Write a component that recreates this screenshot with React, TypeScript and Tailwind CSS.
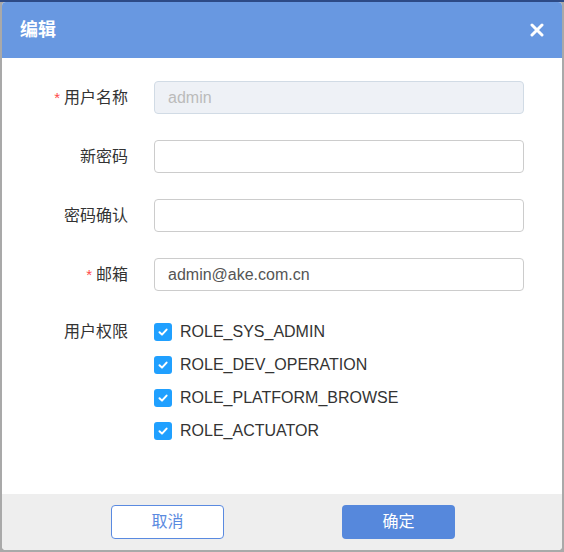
import React from "react";

const font = { fontFamily: '"Liberation Sans", "Noto Sans CJK SC", sans-serif' };

const roles = ["ROLE_SYS_ADMIN", "ROLE_DEV_OPERATION", "ROLE_PLATFORM_BROWSE", "ROLE_ACTUATOR"];

function Field({ label, required, children }: { label: string; required?: boolean; children: React.ReactNode }) {
  return (
    <div className="flex items-center h-[33px]">
      <div className="w-[126px] shrink-0 text-right text-[16px] text-[#333]">
        {required && <span className="text-[#ff4949] mr-[4px] text-[15px]">*</span>}
        {label}
      </div>
      <div className="ml-[26px] w-[370px]">{children}</div>
    </div>
  );
}

function Check({ label }: { label: string }) {
  return (
    <label className="flex items-center h-[33px]">
      <span className="flex h-[18px] w-[18px] items-center justify-center rounded-[3px] bg-[#20a0ff]">
        <svg viewBox="0 0 12 12" className="h-[12px] w-[12px]" fill="none" stroke="#fff" strokeWidth="2" strokeLinecap="round" strokeLinejoin="round">
          <path d="M2.5 6.2 5 8.6 9.6 3.6" />
        </svg>
      </span>
      <span className="ml-[8px] text-[16px] text-[#333]">{label}</span>
    </label>
  );
}

export default function App() {
  return (
    <div className="h-[552px] w-[564px] bg-[#a9a9a9] border-t-2 border-[#2d4a86] pl-[2px] overflow-hidden" style={font}>
      <div className="h-[548px] w-[560px] rounded-[4px] bg-white overflow-hidden flex flex-col">
        <div className="flex h-[56px] items-center justify-between bg-[#6898e1] px-[18px] shrink-0">
          <span className="text-[18px] font-bold text-white">编辑</span>
          <svg viewBox="0 0 14 14" className="h-[14px] w-[14px]" stroke="#fff" strokeWidth="3" strokeLinecap="round">
            <path d="M2 2 12 12M12 2 2 12" />
          </svg>
        </div>
        <div className="flex-1 pt-[23px]">
          <div className="flex flex-col gap-[26px]">
            <Field label="用户名称" required>
              <div className="flex h-[33px] items-center rounded-[4px] border border-[#d1dbe5] bg-[#eef1f6] px-[13px] text-[16px] text-[#bbbbbb]">admin</div>
            </Field>
            <Field label="新密码">
              <div className="h-[33px] rounded-[4px] border border-[#cccccc] bg-white" />
            </Field>
            <Field label="密码确认">
              <div className="h-[33px] rounded-[4px] border border-[#cccccc] bg-white" />
            </Field>
            <Field label="邮箱" required>
              <div className="flex h-[33px] items-center rounded-[4px] border border-[#cccccc] bg-white px-[13px] text-[16px] text-[#555]">admin@ake.com.cn</div>
            </Field>
          </div>
          <div className="mt-[24px] flex">
            <div className="w-[126px] shrink-0 text-right text-[16px] text-[#333] h-[33px] leading-[33px]">用户权限</div>
            <div className="ml-[26px] flex flex-col">
              {roles.map((r) => (
                <Check key={r} label={r} />
              ))}
            </div>
          </div>
        </div>
        <div className="flex h-[56px] shrink-0 items-center bg-[#eeeeee] pl-[109px]">
          <button className="h-[34px] w-[113px] rounded-[4px] border border-[#5a8ae0] bg-white text-[16px] text-[#5a8ae0]">取消</button>
          <button className="ml-[118px] h-[34px] w-[113px] rounded-[4px] bg-[#5688dc] text-[16px] text-white">确定</button>
        </div>
      </div>
    </div>
  );
}
